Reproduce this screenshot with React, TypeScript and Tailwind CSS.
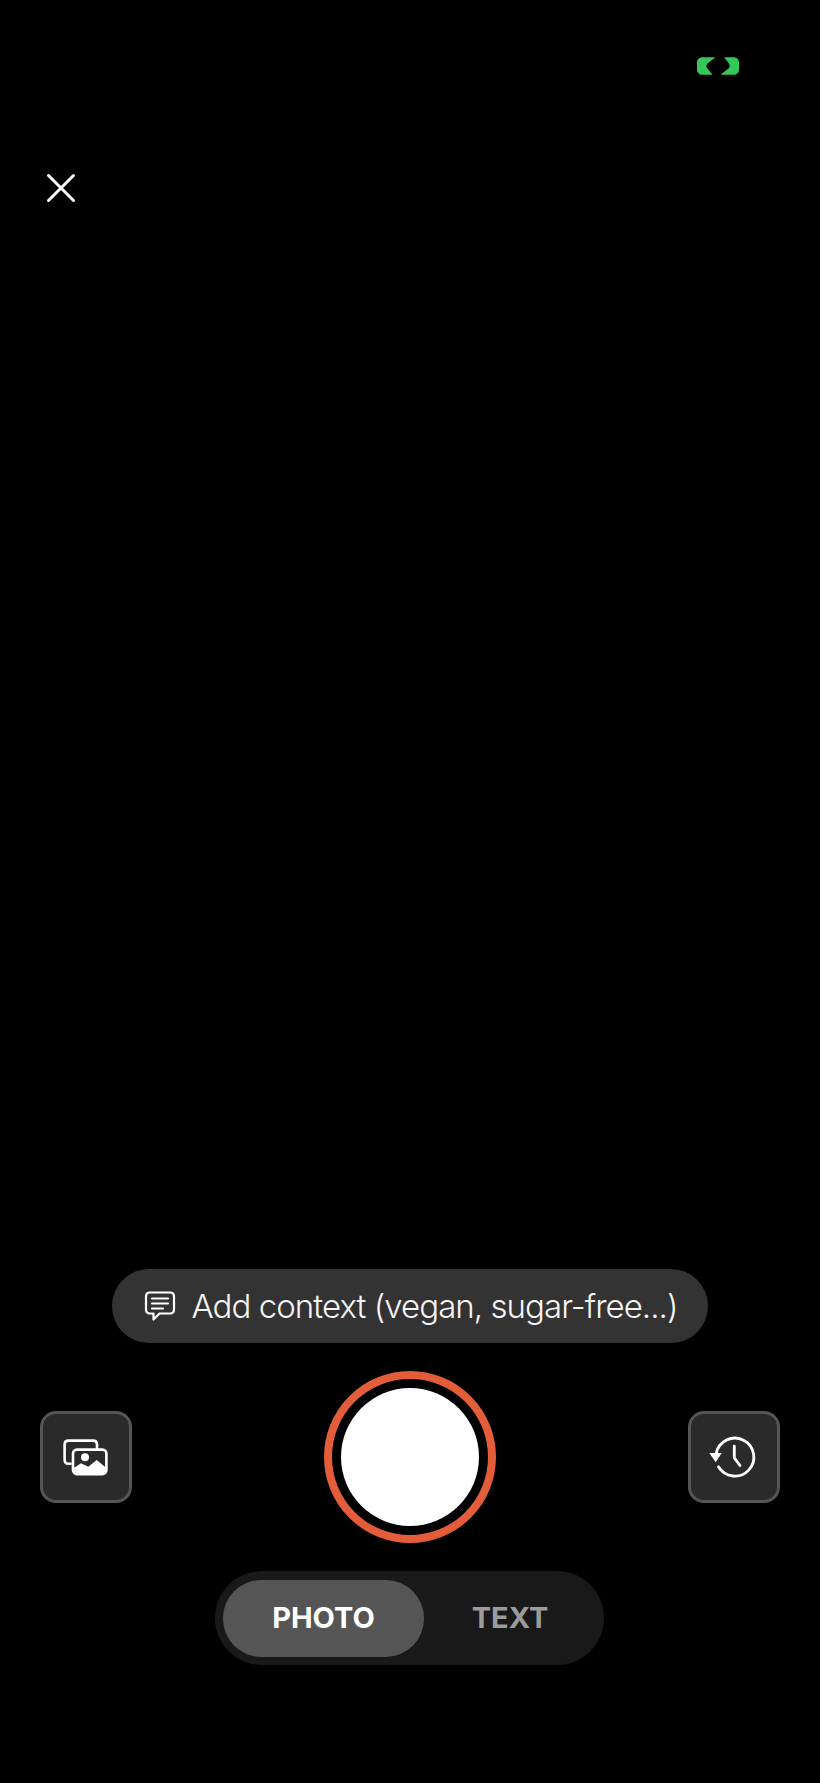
const F = '[font-family:Inter,"Noto_Sans",sans-serif]';

function Signal() {
  return (
    <svg width="44" height="20" viewBox="0 0 44 20" fill="#34c759">
      <path d="M6.500 1.200H19.500L11.500 7.500Q9.500 9.800 11 12L16.500 18.800H6.500C3.200 18.800 1 16.600 1 13.500V6.500C1 3.400 3.200 1.200 6.500 1.200Z" />
      <path d="M37.500 1.200H28L33 7.500Q34.500 9.800 33 12L24.500 18.800H37.500C40.800 18.800 43 16.600 43 13.500V6.500C43 3.400 40.800 1.200 37.500 1.200Z" />
    </svg>
  );
}

function Close() {
  return (
    <svg width="32" height="32" viewBox="0 0 32 32" fill="none" stroke="#fff" strokeWidth="3" strokeLinecap="round">
      <path d="M3.500 3.500L28.500 28.500M28.500 3.500L3.500 28.500" />
    </svg>
  );
}

function Chat() {
  return (
    <svg width="32" height="32" viewBox="0 0 32 32" fill="none" stroke="#fff" strokeWidth="2.200" strokeLinecap="round" strokeLinejoin="round">
      <path d="M6 2.500H26C28.500 2.500 30 4 30 6.500V19.500C30 22 28.500 23.500 26 23.500H15.500L9.500 29.500V23.500H6C3.500 23.500 2 22 2 19.500V6.500C2 4 3.500 2.500 6 2.500Z" />
      <path d="M8 8.500H24M8 13.500H24M8 18.500H19" />
    </svg>
  );
}

function Gallery() {
  return (
    <svg width="52" height="43" viewBox="0 0 52 43" fill="none">
      <path d="M10.500 27.700H8.600C6 27.700 4.600 26.300 4.600 23.700V8.600C4.600 6 6 4.600 8.600 4.600H33C35.600 4.600 37 6 37 8.600V13" stroke="#fff" strokeWidth="2.600" strokeLinecap="round" />
      <rect x="13" y="13.600" width="33.400" height="24.500" rx="4" stroke="#fff" strokeWidth="2.600" />
      <path d="M13 32.500L21 27.300L28.300 30.700L36.700 24L46.400 32V34.500C46.400 37 45 38.500 42.500 38.500H17C14.500 38.500 13 37 13 34.500Z" fill="#fff" />
      <circle cx="25" cy="21.300" r="4" fill="#fff" />
    </svg>
  );
}

function History() {
  return (
    <svg width="52" height="52" viewBox="0 0 52 52" fill="none" stroke="#fff" strokeWidth="2.800" strokeLinecap="round" strokeLinejoin="round">
      <path d="M8.200 22.500A19 19 0 1 1 10.500 35.800" />
      <path d="M26.300 15.200V26.800L32 34.500" />
      <path d="M1.300 22H13.700L7.700 31.200Z" fill="#fff" stroke="none" />
    </svg>
  );
}

export default function App() {
  return (
    <div className={`flex min-h-[1783px] w-[820px] flex-col bg-black text-white ${F}`}>
      <div className="flex justify-end pt-[56px] pr-[80px]">
        <Signal />
      </div>
      <div className="pt-[96px] pl-[45px]">
        <Close />
      </div>
      <div className="flex-1" />
      <div className="flex flex-col items-center pb-[118px]">
        <div className="flex h-[74px] w-[596px] items-center justify-center gap-[15px] rounded-[37px] bg-[#333333] pl-[2px]">
          <Chat />
          <span className="text-[33px] leading-none font-light tracking-[-0.95px] text-[#f5f5f5]">Add context (vegan, sugar-free...)</span>
        </div>
        <div className="mt-[28px] flex w-full items-center justify-between px-[40px]">
          <button className="flex h-[92px] w-[92px] items-center justify-center rounded-[16px] border-[3px] border-[#555555] bg-[#2a2a2a]">
            <Gallery />
          </button>
          <div className="flex h-[172px] w-[172px] items-center justify-center rounded-full border-[8px] border-[#e35d3b] bg-black">
            <div className="h-[138px] w-[138px] rounded-full bg-white" />
          </div>
          <button className="flex h-[92px] w-[92px] items-center justify-center rounded-[16px] border-[3px] border-[#555555] bg-[#2a2a2a]">
            <History />
          </button>
        </div>
        <div className="mt-[28px] mr-[1px] flex h-[94px] w-[389px] items-center rounded-[47px] bg-[#191919] pl-[8px]">
          <div className="flex h-[77px] w-[201px] items-center justify-center rounded-[38px] bg-[#555555] text-[29px] font-bold">PHOTO</div>
          <div className="flex-1 pr-[8px] text-center text-[29px] font-bold text-[#9b9b9b]">TEXT</div>
        </div>
      </div>
    </div>
  );
}
